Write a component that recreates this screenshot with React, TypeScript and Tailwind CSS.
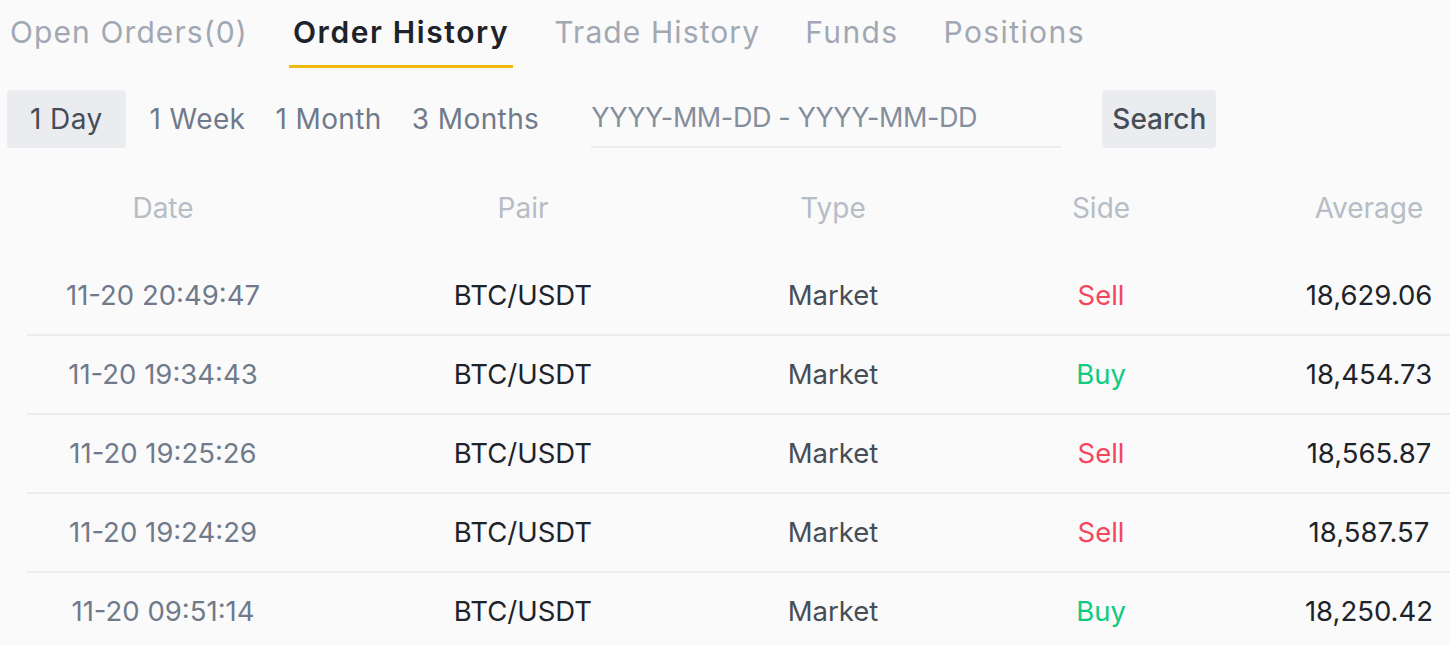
import React from "react";

const tabs = ["Open Orders(0)", "Order History", "Trade History", "Funds", "Positions"];
const ranges = ["1 Day", "1 Week", "1 Month", "3 Months"];

const orders = [
  { date: "11-20 20:49:47", pair: "BTC/USDT", type: "Market", side: "Sell", avg: "18,629.06" },
  { date: "11-20 19:34:43", pair: "BTC/USDT", type: "Market", side: "Buy", avg: "18,454.73" },
  { date: "11-20 19:25:26", pair: "BTC/USDT", type: "Market", side: "Sell", avg: "18,565.87" },
  { date: "11-20 19:24:29", pair: "BTC/USDT", type: "Market", side: "Sell", avg: "18,587.57" },
  { date: "11-20 09:51:14", pair: "BTC/USDT", type: "Market", side: "Buy", avg: "18,250.42" },
];

const cols = "grid grid-cols-[272px_448px_172px_364px_172px] items-center text-center";

const App = () => {
  return (
    <div className="w-[1450px] h-[645px] overflow-hidden bg-[#fafafa] font-['Inter',sans-serif]">
      <div className="flex gap-[41px] pl-[8px] h-[70px]">
        {tabs.map((tab, i) => (
          <div
            key={tab}
            className={`flex flex-col justify-between pt-[12px] ${
              i === 1 ? "text-[#1e2329] font-semibold" : "text-[#a1a8b3]"
            }`}
          >
            <span
              className={`text-[30px] leading-[40px] px-[2px] ${
                i === 1 ? "tracking-[1.6px]" : i > 2 ? "tracking-[1.4px]" : "tracking-[1.1px]"
              }`}
            >
              {tab}
            </span>
            <div className={`h-[3px] -mx-[2px] mb-[2px] ${i === 1 ? "bg-[#f0b90b]" : ""}`} />
          </div>
        ))}
      </div>

      <div className="flex items-center mt-[20px] pl-[7px] h-[58px]">
        <div className="flex items-center gap-[18px]">
          {ranges.map((r, i) => (
            <button
              key={r}
              className={`h-[58px] rounded-[4px] text-[28px] tracking-[0.4px] ${
                i === 0 ? "bg-[#eaecef] text-[#474d57] px-[23px]" : "text-[#707a8a] px-[6px]"
              }`}
            >
              {r}
            </button>
          ))}
        </div>
        <div className="ml-[46px] w-[470px] h-[58px] flex items-center border-b-2 border-[#eaecef]">
          <span className="text-[27px] tracking-[-0.4px] text-[#848e9c]">YYYY-MM-DD - YYYY-MM-DD</span>
        </div>
        <button className="ml-[41px] h-[58px] px-[10px] rounded-[4px] bg-[#eaecef] text-[28px] font-medium text-[#474d57]">
          Search
        </button>
      </div>

      <div className="ml-[27px] mt-[20px]">
        <div className={`${cols} h-[79px] text-[28px] text-[#b7bdc6]`}>
          <span>Date</span>
          <span>Pair</span>
          <span>Type</span>
          <span>Side</span>
          <span>Average</span>
        </div>
        <div className="mt-[10px]">
          {orders.map((o) => (
            <div key={o.date} className={`${cols} h-[79px] border-b-2 border-[#eaecef] text-[27.5px]`}>
              <span className="text-[#707a8a]">{o.date}</span>
              <span className="text-[#1e2329]">{o.pair}</span>
              <span className="text-[#474d57]">{o.type}</span>
              <span className={o.side === "Sell" ? "text-[#f6465d]" : "text-[#0ecb81]"}>{o.side}</span>
              <span className="text-[#1e2329]">{o.avg}</span>
            </div>
          ))}
        </div>
      </div>
    </div>
  );
};

export default App;
